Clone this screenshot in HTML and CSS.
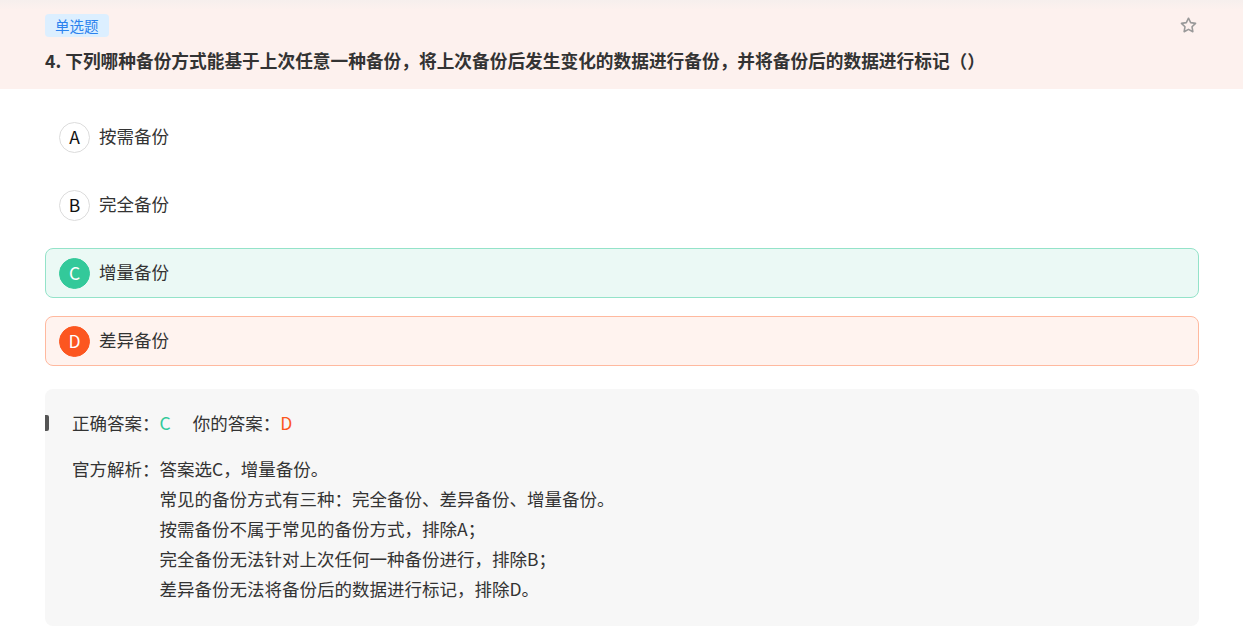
FILE: index.html
```html
<!DOCTYPE html>
<html lang="zh-CN">
<head>
<meta charset="utf-8">
<title>单选题</title>
<link rel="stylesheet" href="styles.css">
</head>
<body>
<header class="q-head">
  <div class="q-top">
    <span class="q-tag">单选题</span>
    <svg class="q-star" width="19" height="19" viewBox="0 0 24 24" fill="none" stroke="#999" stroke-width="2" stroke-linejoin="round">
      <path d="M12 2.8l2.75 5.6 6.15.9-4.450 4.35 1.05 6.15L12 16.9l-5.5 2.9 1.05-6.15L3.1 9.3l6.15-.9z"/>
    </svg>
  </div>
  <h1 class="q-title">4. 下列哪种备份方式能基于上次任意一种备份，将上次备份后发生变化的数据进行备份，并将备份后的数据进行标记（）</h1>
</header>
<main class="q-body">
  <ul class="opts">
    <li class="opt"><span class="opt-key">A</span><span class="opt-text">按需备份</span></li>
    <li class="opt"><span class="opt-key">B</span><span class="opt-text">完全备份</span></li>
    <li class="opt opt-right"><span class="opt-key">C</span><span class="opt-text">增量备份</span></li>
    <li class="opt opt-wrong"><span class="opt-key">D</span><span class="opt-text">差异备份</span></li>
  </ul>
  <section class="ana">
    <span class="ana-mark"></span>
    <div class="ana-answers">
      <span>正确答案：<em class="ok">C</em></span>
      <span>你的答案：<em class="bad">D</em></span>
    </div>
    <div class="ana-detail">
      <span class="ana-label">官方解析：</span>
      <div class="ana-lines">
        <p>答案选C，增量备份。</p>
        <p>常见的备份方式有三种：完全备份、差异备份、增量备份。</p>
        <p>按需备份不属于常见的备份方式，排除A；</p>
        <p>完全备份无法针对上次任何一种备份进行，排除B；</p>
        <p>差异备份无法将备份后的数据进行标记，排除D。</p>
      </div>
    </div>
  </section>
</main>
</body>
</html>
```
FILE: styles.css
```css
* { box-sizing: border-box; }
html, body { margin: 0; padding: 0; background: #fff; }
body {
  font-family: "Noto Sans CJK SC", "Noto Sans", sans-serif;
  color: #333;
  font-size: 17.5px;
}
.q-head {
  height: 89px;
  padding: 14px 44px 0 45px;
  background: linear-gradient(#f6efed 0px, #fdf1ee 10px, #fdf1ee 100%);
}
.q-top {
  display: flex;
  align-items: center;
  justify-content: space-between;
  height: 23px;
}
.q-tag {
  display: inline-flex;
  align-items: center;
  height: 23px;
  padding: 0 10px;
  background: #dcefff;
  color: #2b82ee;
  font-size: 14.5px;
  border-radius: 4px;
}
.q-star { margin-right: 1px; }
.q-title {
  margin: 11px 0 0;
  font-size: 17.7px;
  line-height: 24px;
  font-weight: 700;
  color: #333;
  white-space: nowrap;
}
.q-body { padding: 23px 44px 20px 45px; }
.opts {
  list-style: none;
  margin: 0;
  padding: 0;
  display: flex;
  flex-direction: column;
  gap: 18px;
}
.opt {
  display: flex;
  align-items: center;
  height: 50px;
  padding-left: 13px;
  border: 1px solid transparent;
  border-radius: 8px;
}
.opt-key {
  width: 31px;
  height: 31px;
  border-radius: 50%;
  border: 1px solid #dcdcdc;
  display: flex;
  align-items: center;
  justify-content: center;
  font-size: 17.5px;
  padding-bottom: 1px;
  color: #111;
  background: #fff;
  flex: none;
}
.opt-text { margin-left: 9px; color: #333; padding-bottom: 3px; }
.opt-right { background: #ebf9f5; border-color: #94e3c9; }
.opt-right .opt-key { background: #33c99a; border-color: #33c99a; color: #fff; }
.opt-wrong { background: #fff3ef; border-color: #ffb99f; }
.opt-wrong .opt-key { background: #fc5620; border-color: #fc5620; color: #fff; }
.ana {
  position: relative;
  margin-top: 23px;
  background: #f7f7f7;
  border-radius: 8px;
  padding: 19px 27px 22px;
  line-height: 30px;
}
.ana-mark {
  position: absolute;
  left: 0;
  top: 26px;
  width: 4px;
  height: 16px;
  background: #555;
  border-radius: 0 2px 2px 0;
}
.ana-answers { display: flex; gap: 22px; }
.ana-answers em { font-style: normal; }
.ok { color: #33c99a; }
.bad { color: #fc5620; }
.ana-detail { display: flex; margin-top: 16px; }
.ana-label { flex: none; }
.ana-lines p { margin: 0; }
```
